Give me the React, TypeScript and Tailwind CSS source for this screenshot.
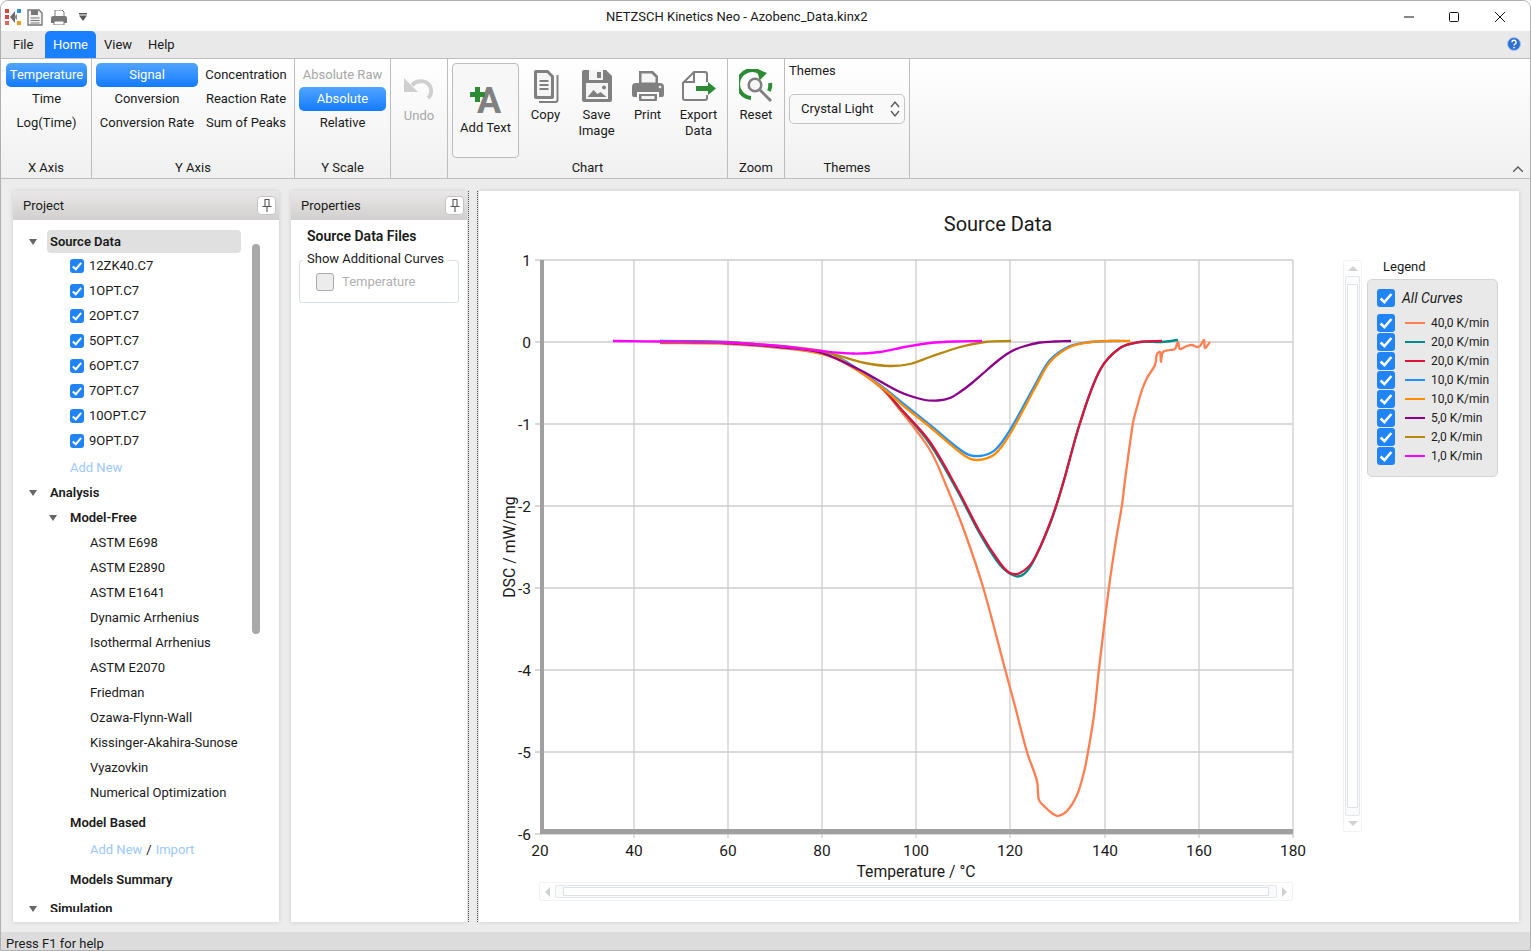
import React from "react";

type Pt = [number, number];

// chord-length spline through the traced points, copes with uneven spacing
const smooth = (pts: Pt[]) => {
  const len = (a: Pt, b: Pt) => Math.hypot(b[0] - a[0], b[1] - a[1]) || 1;
  const handle = (prev: Pt, cur: Pt, next: Pt, seg: number, sign: number): Pt => {
    const total = len(prev, cur) + len(cur, next);
    return [
      cur[0] + (sign * (next[0] - prev[0]) * seg) / (3 * total),
      cur[1] + (sign * (next[1] - prev[1]) * seg) / (3 * total),
    ];
  };
  let d = `M${pts[0][0]} ${pts[0][1]}`;
  for (let i = 0; i < pts.length - 1; i++) {
    const p0 = pts[i - 1] || pts[i];
    const p1 = pts[i];
    const p2 = pts[i + 1];
    const p3 = pts[i + 2] || p2;
    const seg = len(p1, p2);
    const c1 = handle(p0, p1, p2, seg, 1);
    const c2 = handle(p1, p2, p3, seg, -1);
    d += ` C${c1[0].toFixed(1)} ${c1[1].toFixed(1)} ${c2[0].toFixed(1)} ${c2[1].toFixed(1)} ${p2[0]} ${p2[1]}`;
  }
  return d;
};

const curves: { color: string; pts: Pt[] }[] = [
  {
    color: "#ff7f50",
    pts: [[660, 343], [727, 344], [780, 348], [822, 354], [850, 366], [880, 387], [900, 410], [930, 450], [948, 490], [965, 533], [983, 587], [1005, 669], [1016, 710], [1027, 752], [1037, 781], [1039, 800], [1045, 807], [1053, 814], [1058, 816], [1067, 811], [1077, 795], [1084, 772], [1088, 752], [1094, 715], [1099, 669], [1109, 587], [1116, 540], [1122, 505], [1125, 480], [1133, 423], [1137, 407], [1142, 390], [1147, 378], [1155, 365], [1157, 354], [1160, 352], [1161, 362], [1163, 352], [1170, 350], [1175, 349], [1178, 342], [1180, 349], [1187, 346], [1192, 345], [1197, 347], [1200, 346], [1204, 340], [1205, 348], [1210, 342]],
  },
  {
    color: "#008b8b",
    pts: [[660, 341], [727, 342], [780, 347], [822, 353], [850, 365], [880, 386], [900, 408], [930, 444], [958, 492], [980, 534], [1000, 565], [1015, 576], [1024, 574], [1033, 562], [1050, 524], [1062, 487], [1080, 423], [1100, 370], [1120, 348], [1140, 342], [1162, 342], [1178, 340]],
  },
  {
    color: "#dc143c",
    pts: [[660, 342], [727, 343], [780, 347], [822, 353], [850, 365], [880, 386], [900, 408], [930, 442], [958, 490], [980, 532], [1000, 563], [1010, 573], [1020, 573], [1033, 561], [1050, 523], [1062, 487], [1080, 423], [1100, 370], [1120, 348], [1140, 342], [1162, 341]],
  },
  {
    color: "#1e90ff",
    pts: [[660, 341], [727, 343], [790, 348], [822, 353], [840, 358], [880, 385], [905, 405], [930, 425], [965, 453], [980, 456], [995, 450], [1010, 430], [1035, 385], [1050, 360], [1070, 346], [1090, 342], [1110, 341], [1120, 341]],
  },
  {
    color: "#ff8c00",
    pts: [[660, 342], [727, 343], [790, 348], [822, 354], [840, 359], [880, 386], [905, 407], [930, 427], [965, 456], [978, 460], [995, 454], [1010, 434], [1035, 388], [1050, 362], [1070, 347], [1092, 342], [1110, 341], [1130, 341]],
  },
  {
    color: "#8b008b",
    pts: [[660, 342], [727, 343], [790, 348], [822, 353], [860, 370], [900, 392], [925, 400], [938, 400.5], [950, 398], [960, 392], [972, 383], [987, 370], [1000, 359], [1012, 351], [1025, 346], [1040, 342.5], [1055, 341.5], [1071, 341]],
  },
  {
    color: "#b8860b",
    pts: [[660, 342], [727, 342.5], [790, 347], [822, 351], [840, 356], [865, 363], [890, 366], [910, 364], [930, 357], [960, 347], [985, 342], [1011, 341]],
  },
  {
    color: "#ff00ff",
    pts: [[613, 341], [660, 341.5], [727, 342.5], [780, 346], [822, 351], [853, 353.5], [880, 352], [905, 347], [930, 343], [955, 341.5], [982, 341]],
  },
];

const xLabels = [20, 40, 60, 80, 100, 120, 140, 160, 180];
const xPos = [540, 634, 728, 822, 916, 1010, 1105, 1199, 1293];
const yLabels = ["1", "0", "-1", "-2", "-3", "-4", "-5", "-6"];
const yPos = [260, 342, 424, 506, 588, 670, 752, 834];

const Chart = () => (
  <svg viewBox="495 245 815 637" className="w-[815px] h-[637px] shrink-0">
    {xPos.slice(1).map((x) => (
      <line key={x} x1={x} x2={x} y1={260} y2={838} stroke="#cdcdcd" strokeWidth="1.3" />
    ))}
    {yPos.map((y) => (
      <line key={y} x1={535} x2={1293} y1={y} y2={y} stroke="#cdcdcd" strokeWidth="1.3" />
    ))}
    <rect x={540} y={260} width={4} height={574} fill="#a0a0a0" />
    <rect x={540} y={829} width={753} height={5} fill="#a0a0a0" />
    {curves.map((c) => (
      <path key={c.color} d={smooth(c.pts)} fill="none" stroke={c.color} strokeWidth="2.3" strokeLinejoin="round" />
    ))}
    {xLabels.map((l, i) => (
      <text key={l} x={xPos[i]} y={856} textAnchor="middle" fontSize="15.5" fill="#1a1a1a">{l}</text>
    ))}
    {yLabels.map((l, i) => (
      <text key={l} x={531} y={yPos[i] + 6} textAnchor="end" fontSize="15.5" fill="#1a1a1a">{l}</text>
    ))}
    <text x={916} y={877} textAnchor="middle" fontSize="15.7" fill="#1a1a1a">Temperature / °C</text>
    <text transform="translate(515 547) rotate(-90)" textAnchor="middle" fontSize="15.8" fill="#1a1a1a">DSC / mW/mg</text>
  </svg>
);

const BlueCheck = ({ size = "w-[14px] h-[14px]" }: { size?: string }) => (
  <span className={`${size} shrink-0 rounded-[3px] bg-[#2083f6] flex items-center justify-center`}>
    <svg viewBox="0 0 14 14" className="w-full h-full">
      <path d="M2.8 7.4 L5.8 10.2 L11.2 3.9" fill="none" stroke="white" strokeWidth="2" />
    </svg>
  </span>
);

const Triangle = () => (
  <svg viewBox="0 0 8 6" className="w-[8px] h-[6px] shrink-0">
    <path d="M0 0 H8 L4 6 Z" fill="#666" />
  </svg>
);

const RibbonBtn = ({ label, on, off, w }: { label: string; on?: boolean; off?: boolean; w: string }) => (
  <div
    className={`${w} h-[24px] rounded-[5px] flex items-center justify-center whitespace-nowrap ${
      on ? "bg-gradient-to-b from-[#4fa4ff] to-[#0f7bff] text-white" : off ? "text-[#a8a8a8]" : "text-[#1a1a1a]"
    }`}
  >
    {label}
  </div>
);

const Group = ({ w, label, children }: { w: string; label: string; children: React.ReactNode }) => (
  <div className={`${w} shrink-0 h-full border-r border-[#bdbdbd] flex flex-col`}>
    <div className="flex-1 min-h-0">{children}</div>
    <div className="h-[22px] text-center leading-[24px] text-[#1a1a1a]">{label}</div>
  </div>
);

const ToolBtn = ({ w, icon, children }: { w: string; icon: React.ReactNode; children: React.ReactNode }) => (
  <div className={`${w} shrink-0 flex flex-col items-center pt-[7px] text-center leading-[16px] text-[#1a1a1a]`}>
    <div className="h-[40px] mb-[1px] flex items-center justify-center">{icon}</div>
    {children}
  </div>
);

const CopyIcon = () => (
  <svg viewBox="0 0 30 34" className="w-[30px] h-[34px]">
    <path d="M26.5 6v25a2 2 0 0 1-2 2H8" fill="none" stroke="#808080" strokeWidth="2" />
    <path d="M5 1h12l6 6v21a2 2 0 0 1-2 2H5a2 2 0 0 1-2-2V3a2 2 0 0 1 2-2z" fill="#808080" />
    <path d="M6 4h10l4 4v18a1 1 0 0 1-1 1H7a1 1 0 0 1-1-1z" fill="#f5f5f5" />
    <path d="M8.5 12h9M8.5 16h9M8.5 20h9" stroke="#808080" strokeWidth="2" />
  </svg>
);

const SaveIcon = () => (
  <svg viewBox="0 0 30 32" className="w-[30px] h-[32px]">
    <path d="M2 0h22l6 6v24a2 2 0 0 1-2 2H2a2 2 0 0 1-2-2V2a2 2 0 0 1 2-2z" fill="#808080" />
    <rect x="7" y="0" width="14" height="10" fill="#f5f5f5" />
    <rect x="15" y="2" width="4" height="6" fill="#808080" />
    <rect x="4" y="13" width="22" height="16" fill="#f5f5f5" />
    <path d="M5.5 27l6-7 4 4 3-2 6 5z" fill="#808080" />
    <circle cx="22" cy="17.5" r="2" fill="#808080" />
  </svg>
);

const PrintIcon = () => (
  <svg viewBox="0 0 32 30" className="w-[32px] h-[30px]">
    <path d="M7 0h14l5 5v8H7z" fill="#808080" />
    <path d="M9.5 2.5h10l4 4v5h-14z" fill="#f5f5f5" />
    <path d="M4 12h24a4 4 0 0 1 4 4v8a2 2 0 0 1-2 2h-3v-5H5v5H2a2 2 0 0 1-2-2v-8a4 4 0 0 1 4-4z" fill="#808080" />
    <circle cx="28" cy="16" r="1.3" fill="#f5f5f5" />
    <path d="M7 23h18v6a1 1 0 0 1-1 1H8a1 1 0 0 1-1-1z" fill="#808080" />
    <rect x="9.5" y="25" width="13" height="3" fill="#f5f5f5" />
  </svg>
);

const ExportIcon = () => (
  <svg viewBox="0 0 34 30" className="w-[34px] h-[30px]">
    <path d="M12 1H23a2 2 0 0 1 2 2v8M25 24v3a2 2 0 0 1-2 2H3a2 2 0 0 1-2-2V12L12 1v10H1" fill="none" stroke="#808080" strokeWidth="2" />
    <path d="M14 15h12v-4l8 6.5-8 6.5v-4H14z" fill="#2e8b35" />
  </svg>
);

const ResetIcon = () => (
  <svg viewBox="0 0 34 34" className="w-[34px] h-[34px]">
    <path d="M21 3.5A14 14 0 1 0 12 29" fill="none" stroke="#2e8b35" strokeWidth="4" />
    <path d="M30 22a14 14 0 0 0 1.2-8" fill="none" stroke="#2e8b35" strokeWidth="4" />
    <path d="M18 0l10 4-7.500 7.500z" fill="#2e8b35" />
    <circle cx="16" cy="16" r="6.300" fill="#f5f5f5" stroke="#808080" strokeWidth="2.600" />
    <path d="M21 21l11 11" stroke="#808080" strokeWidth="3" />
  </svg>
);

const Logo = () => (
  <svg viewBox="0 0 16 16" className="w-[16px] h-[16px]">
    <rect x="0" y="0" width="4" height="4" fill="#d9473c" />
    <rect x="0" y="6" width="4" height="4" fill="#d9473c" />
    <rect x="0" y="12" width="4" height="4" fill="#e26a5c" />
    <path d="M5 8l5-6v12z" fill="#6b6b6b" />
    <path d="M9 8l3-3v6z" fill="#8a8a8a" />
    <rect x="12" y="0" width="4" height="4" fill="#2f8fcf" />
    <rect x="12" y="12" width="4" height="4" fill="#f39a1f" />
  </svg>
);

const Scroll = ({ vertical }: { vertical?: boolean }) =>
  vertical ? (
    <div className="w-[19px] h-[572px] mt-[15px] shrink-0 border border-[#f0f2f4] rounded-[2px] flex flex-col items-center">
      <svg viewBox="0 0 10 5" className="w-[10px] h-[5px] my-[5px] shrink-0"><path d="M0 5L5 0l5 5z" fill="#d2d2d2" /></svg>
      <div className="flex-1 w-[15px] border border-[#e4e7ea] rounded-[2px] bg-[#fafbfc] py-[7px] px-[1px]">
        <div className="w-full h-full border border-[#dfe3e7] bg-white" />
      </div>
      <svg viewBox="0 0 10 5" className="w-[10px] h-[5px] my-[5px] shrink-0"><path d="M0 0l5 5 5-5z" fill="#d2d2d2" /></svg>
    </div>
  ) : (
    <div className="w-[754px] h-[19px] ml-[44px] border border-[#f0f2f4] rounded-[2px] flex items-center">
      <svg viewBox="0 0 5 10" className="w-[5px] h-[10px] mx-[5px] shrink-0"><path d="M5 0L0 5l5 5z" fill="#d2d2d2" /></svg>
      <div className="flex-1 h-[13px] border border-[#e4e7ea] rounded-[2px] bg-[#fafbfc] px-[7px] py-[1px]">
        <div className="w-full h-full border border-[#dfe3e7] bg-white" />
      </div>
      <svg viewBox="0 0 5 10" className="w-[5px] h-[10px] mx-[5px] shrink-0"><path d="M0 0l5 5-5 5z" fill="#d2d2d2" /></svg>
    </div>
  );

const PanelHeader = ({ title }: { title: string }) => (
  <div className="h-[29px] shrink-0 rounded-t-[4px] bg-gradient-to-b from-[#e9e7e7] to-[#d2d0cf] flex items-center justify-between pl-[10px] pr-[3px] text-[#1a1a1a]">
    {title}
    <span className="w-[19px] h-[19px] bg-white border border-[#c4c4c4] rounded-[4px] flex items-center justify-center">
      <svg viewBox="0 0 10 13" className="w-[10px] h-[13px]">
        <path d="M2.500 0.500h5M3 0.500v6.500M7 0.500v6.500M0.500 7.500h9M5 7.500v5.500" fill="none" stroke="#555" strokeWidth="1.100" />
      </svg>
    </span>
  </div>
);

const files = ["12ZK40.C7", "1OPT.C7", "2OPT.C7", "5OPT.C7", "6OPT.C7", "7OPT.C7", "10OPT.C7", "9OPT.D7"];
const methods = ["ASTM E698", "ASTM E2890", "ASTM E1641", "Dynamic Arrhenius", "Isothermal Arrhenius", "ASTM E2070", "Friedman", "Ozawa-Flynn-Wall", "Kissinger-Akahira-Sunose", "Vyazovkin", "Numerical Optimization"];
const legend = [
  ["40,0 K/min", "bg-[#ff7f50]"],
  ["20,0 K/min", "bg-[#008b8b]"],
  ["20,0 K/min", "bg-[#dc143c]"],
  ["10,0 K/min", "bg-[#1e90ff]"],
  ["10,0 K/min", "bg-[#ff8c00]"],
  ["5,0 K/min", "bg-[#8b008b]"],
  ["2,0 K/min", "bg-[#b8860b]"],
  ["1,0 K/min", "bg-[#ff00ff]"],
];

export default function App() {
  return (
    <div className="w-[1531px] h-[951px] overflow-hidden flex flex-col bg-[#ececec] border border-[#b0b0b0] rounded-t-[8px] font-[Roboto,sans-serif] text-[13px] text-[#1a1a1a]">
      {/* title bar */}
      <div className="h-[30px] shrink-0 bg-white flex items-center pt-[2px]">
        <div className="w-[605px] flex items-center pl-[4px]">
          <Logo />
          <svg viewBox="0 0 16 17" className="w-[16px] h-[17px] ml-[6px]">
            <path d="M1 1h11l3 3v12H1z" fill="#f4f4f4" stroke="#777" strokeWidth="1.400" />
            <rect x="4" y="1" width="7" height="5" fill="#777" />
            <path d="M3.500 9h9M3.500 11.500h9M3.500 14h9" stroke="#777" />
          </svg>
          <svg viewBox="0 0 16 15" className="w-[16px] h-[15px] ml-[8px]">
            <path d="M4 0h7l2 2v5H4z" fill="#fff" stroke="#777" />
            <path d="M2 6h12a2 2 0 0 1 2 2v5h-3v-2H3v2H0V8a2 2 0 0 1 2-2z" fill="#777" />
            <rect x="3" y="11" width="10" height="4" fill="#fff" stroke="#777" />
          </svg>
          <svg viewBox="0 0 8 8" className="w-[8px] h-[8px] ml-[12px] mb-[1px]">
            <path d="M0 0h8v1.400H0zM0 2.600h8L4 8z" fill="#555" />
          </svg>
        </div>
        <div className="whitespace-nowrap">NETZSCH Kinetics Neo - Azobenc_Data.kinx2</div>
        <div className="ml-auto flex items-center pr-[25px]">
          <svg viewBox="0 0 10 10" className="w-[10px] h-[10px]"><path d="M0 5h10" stroke="#111" strokeWidth="1" /></svg>
          <svg viewBox="0 0 10 10" className="w-[10px] h-[10px] ml-[35px]"><rect x=".5" y=".5" width="9" height="9" rx="1" fill="none" stroke="#111" /></svg>
          <svg viewBox="0 0 10 10" className="w-[10px] h-[10px] ml-[36px]"><path d="M0 0l10 10M10 0L0 10" stroke="#111" /></svg>
        </div>
      </div>

      {/* menu */}
      <div className="h-[27px] shrink-0 bg-[#e9e9e9] flex items-stretch">
        <div className="w-[44px] pl-[12px] flex items-center">File</div>
        <div className="w-[51px] bg-[#1a80ff] text-white rounded-t-[5px] flex items-center justify-center">Home</div>
        <div className="ml-[8px] w-[44px] flex items-center">View</div>
        <div className="flex items-center">Help</div>
        <div className="ml-auto mr-[9px] pb-[2px] flex items-center">
          <svg viewBox="0 0 14 14" className="w-[14px] h-[14px]">
            <circle cx="7" cy="7" r="6.500" fill="#2b6fd0" stroke="#a9c6ee" />
            <path d="M4.900 5.300a2.100 2 0 1 1 3 1.800c-.7.4-.9.7-.9 1.500" fill="none" stroke="white" strokeWidth="1.400" />
            <circle cx="7" cy="10.600" r=".9" fill="white" />
          </svg>
        </div>
      </div>

      {/* ribbon */}
      <div className="h-[121px] shrink-0 border-y border-[#bdbdbd] bg-gradient-to-b from-white to-[#f0f0f0] flex relative">
        <Group w="w-[91px]" label="X Axis">
          <div className="pt-[4px] pl-[5px]">
            <RibbonBtn w="w-[81px]" label="Temperature" on />
            <RibbonBtn w="w-[81px]" label="Time" />
            <RibbonBtn w="w-[81px]" label="Log(Time)" />
          </div>
        </Group>
        <Group w="w-[203px]" label="Y Axis">
          <div className="pt-[4px] pl-[4px] flex gap-[2px]">
            <div>
              <RibbonBtn w="w-[102px]" label="Signal" on />
              <RibbonBtn w="w-[102px]" label="Conversion" />
              <RibbonBtn w="w-[102px]" label="Conversion Rate" />
            </div>
            <div>
              <RibbonBtn w="w-[92px]" label="Concentration" />
              <RibbonBtn w="w-[92px]" label="Reaction Rate" />
              <RibbonBtn w="w-[92px]" label="Sum of Peaks" />
            </div>
          </div>
        </Group>
        <Group w="w-[96px]" label="Y Scale">
          <div className="pt-[4px] pl-[4px]">
            <RibbonBtn w="w-[87px]" label="Absolute Raw" off />
            <RibbonBtn w="w-[87px]" label="Absolute" on />
            <RibbonBtn w="w-[87px]" label="Relative" />
          </div>
        </Group>
        <Group w="w-[57px]" label="">
          <div className="flex flex-col items-center pt-[17px] text-[#a8a8a8]">
            <svg viewBox="0 0 32 24" className="w-[32px] h-[24px]">
              <path d="M9 9 C15 3 26 4 28 13 C29 17 27 20 25 22" fill="none" stroke="#cfcfcf" strokeWidth="4" />
              <path d="M1 2 L1 16 L15 16 Z" fill="#cfcfcf" />
            </svg>
            <div className="mt-[6px]">Undo</div>
          </div>
        </Group>
        <Group w="w-[280px]" label="Chart">
          <div className="flex pl-[4px]">
            <div className="w-[67px] h-[95px] mt-[4px] shrink-0 border border-[#bcbcbc] rounded-[4px] bg-[#f7f7f7] flex flex-col items-center pt-[20px]">
              <svg viewBox="0 0 34 32" className="w-[34px] h-[32px] overflow-visible">
                <text x="20" y="29" textAnchor="middle" fontSize="36" fontWeight="700" fill="#808080">A</text>
                <path d="M6 3h5v5h5v5h-5v5H6v-5H1V8h5z" fill="#2e8b35" />
              </svg>
              <div className="mt-[2px] text-[#1a1a1a]">Add Text</div>
            </div>
            <ToolBtn w="w-[51px] ml-[1px]" icon={<CopyIcon />}>Copy</ToolBtn>
            <ToolBtn w="w-[51px]" icon={<SaveIcon />}>Save<br />Image</ToolBtn>
            <ToolBtn w="w-[51px]" icon={<PrintIcon />}>Print</ToolBtn>
            <ToolBtn w="w-[51px]" icon={<ExportIcon />}>Export<br />Data</ToolBtn>
          </div>
        </Group>
        <Group w="w-[57px]" label="Zoom">
          <ToolBtn w="w-full" icon={<ResetIcon />}>Reset</ToolBtn>
        </Group>
        <Group w="w-[125px]" label="Themes">
          <div className="pl-[4px] pt-[3px]">
            <div className="leading-[18px]">Themes</div>
            <div className="mt-[14px] w-[116px] h-[30px] border border-[#c4c4c4] rounded-[5px] bg-[#f9f9f9] flex items-center justify-between pl-[11px] pr-[3px]">
              Crystal Light
              <svg viewBox="0 0 12 18" className="w-[12px] h-[18px]">
                <path d="M2 7l4-5 4 5M2 11l4 5 4-5" fill="none" stroke="#555" strokeWidth="1.300" />
              </svg>
            </div>
          </div>
        </Group>
        <svg viewBox="0 0 10 6" className="w-[10px] h-[6px] absolute right-[7px] bottom-[6px]">
          <path d="M0 6l5-5 5 5" fill="none" stroke="#555" strokeWidth="1.300" />
        </svg>
      </div>

      {/* main */}
      <div className="flex-1 min-h-0 flex pl-[12px] pt-[12px] pb-[10px]">
        <div className="w-[266px] shrink-0 bg-white rounded-t-[4px] shadow-[0_0_4px_rgba(0,0,0,0.15)] flex flex-col">
          <PanelHeader title="Project" />
          <div className="relative flex-1 min-h-0">
            <div className="h-[692px] overflow-hidden pt-[10px] text-[#1a1a1a]">
              <div className="flex items-center h-[23px] pl-[16px]">
                <Triangle />
                <div className="ml-[10px] w-[194px] h-[23px] bg-[#e0e0e0] rounded-[4px] flex items-center pl-[3px] font-semibold">Source Data</div>
              </div>
              {files.map((f) => (
                <div key={f} className="flex items-center h-[25px] pl-[57px] gap-[5px]">
                  <BlueCheck />
                  {f}
                </div>
              ))}
              <div className="h-[25px] mt-[2px] pl-[57px] flex items-center text-[#9cc8ff]">Add New</div>
              <div className="h-[25px] pl-[16px] flex items-center font-semibold">
                <Triangle />
                <span className="ml-[13px]">Analysis</span>
              </div>
              <div className="h-[25px] pl-[36px] flex items-center font-semibold">
                <Triangle />
                <span className="ml-[13px]">Model-Free</span>
              </div>
              {methods.map((m) => (
                <div key={m} className="h-[25px] pl-[77px] flex items-center">{m}</div>
              ))}
              <div className="h-[25px] mt-[5px] pl-[57px] flex items-center font-semibold">Model Based</div>
              <div className="h-[25px] mt-[2px] pl-[77px] flex items-center gap-[4px]">
                <span className="text-[#9cc8ff]">Add New</span>/<span className="text-[#9cc8ff]">Import</span>
              </div>
              <div className="h-[25px] mt-[5px] pl-[57px] flex items-center font-semibold">Models Summary</div>
              <div className="h-[25px] mt-[4px] pl-[16px] flex items-center font-semibold">
                <Triangle />
                <span className="ml-[13px]">Simulation</span>
              </div>
            </div>
            <div className="absolute left-[239px] top-[24px] w-[8px] h-[390px] rounded-[4px] bg-[#a9a9a9]" />
          </div>
        </div>

        <div className="w-[176px] ml-[12px] shrink-0 bg-white rounded-t-[4px] shadow-[0_0_4px_rgba(0,0,0,0.15)] flex flex-col">
          <PanelHeader title="Properties" />
          <div className="pl-[8px] pr-[8px] pt-[8px]">
            <div className="pl-[8px] h-[17px] leading-[17px] font-semibold text-[14px]">Source Data Files</div>
            <fieldset className="mt-[8px] min-w-0 border border-[#d8dfe6] rounded-[3px] h-[50px] pl-[3px] pt-[4px]">
              <legend className="px-[4px] -translate-y-[2px] leading-[15px] whitespace-nowrap">Show Additional Curves</legend>
              <div className="ml-[13px] flex items-center gap-[8px] text-[#b0b0b0]">
                <span className="w-[18px] h-[18px] bg-[#ececec] border border-[#aaaaaa] rounded-[3px]" />
                Temperature
              </div>
            </fieldset>
          </div>
        </div>

        <div className="w-[10px] ml-[1px] mr-[1px] shrink-0 border-x border-dotted border-[#555]" />

        <div className="w-[1040px] shrink-0 bg-white shadow-[0_0_4px_rgba(0,0,0,0.15)] flex flex-col">
          <div className="h-[54px] shrink-0 pt-[12px] flex items-center justify-center text-[20px] pr-[2px]">Source Data</div>
          <div className="flex pl-[16px] h-[637px] shrink-0">
            <Chart />
            <div className="ml-[33px] flex">
              <Scroll vertical />
              <div className="ml-[5px] w-[131px] mt-[12px]">
                <div className="h-[22px] pl-[16px] leading-[19px]">Legend</div>
                <div className="h-[198px] border border-[#d4d4d4] rounded-[5px] bg-[#e9e9e9] pl-[9px] pt-[9px]">
                  <div className="flex items-center h-[18px] gap-[7px] italic text-[14px]">
                    <BlueCheck size="w-[18px] h-[18px]" />
                    All Curves
                  </div>
                  <div className="mt-[6px]">
                    {legend.map(([t, c], i) => (
                      <div key={i} className="flex items-center h-[19px] text-[12px]">
                        <BlueCheck size="w-[18px] h-[18px]" />
                        <span className={`w-[20px] h-[2px] ml-[10px] ${c}`} />
                        <span className="ml-[6px]">{t}</span>
                      </div>
                    ))}
                  </div>
                </div>
              </div>
            </div>
          </div>
          <div className="pl-[16px]">
            <Scroll />
          </div>
        </div>
      </div>

      {/* status bar */}
      <div className="h-[18px] shrink-0 bg-[#dcdcdc] pl-[5px] leading-[24px] text-[13px] overflow-hidden">Press F1 for help</div>
    </div>
  );
}
